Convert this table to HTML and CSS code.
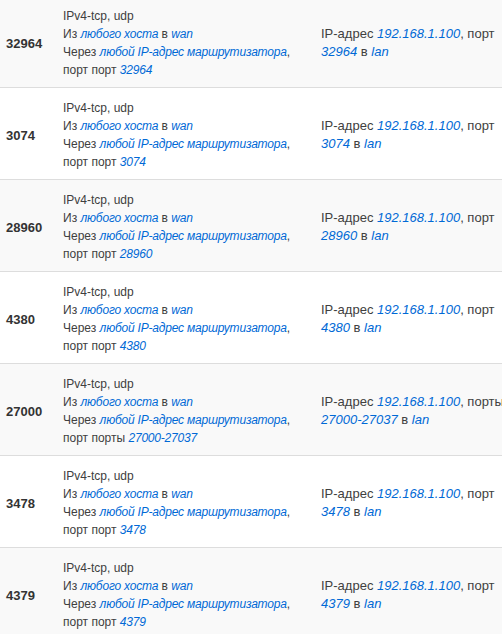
FILE: index.html
```html
<!DOCTYPE html>
<html lang="ru">
<head>
    <meta charset="UTF-8">
    <title>Перенаправление портов</title>
    <link rel="stylesheet" href="styles.css">
</head>
<body>
    <table class="rules">
        <tr class="row odd">
            <td class="name">32964</td>
            <td class="match">IPv4-tcp, udp<br>Из <a>любого хоста</a> в <a>wan</a><br>Через <a>любой IP-адрес маршрутизатора</a>,<br>порт порт <a>32964</a></td>
            <td class="target">IP-адрес <a>192.168.1.100</a>, порт <a>32964</a> в <a>lan</a></td>
        </tr>
        <tr class="row">
            <td class="name">3074</td>
            <td class="match">IPv4-tcp, udp<br>Из <a>любого хоста</a> в <a>wan</a><br>Через <a>любой IP-адрес маршрутизатора</a>,<br>порт порт <a>3074</a></td>
            <td class="target">IP-адрес <a>192.168.1.100</a>, порт <a>3074</a> в <a>lan</a></td>
        </tr>
        <tr class="row odd">
            <td class="name">28960</td>
            <td class="match">IPv4-tcp, udp<br>Из <a>любого хоста</a> в <a>wan</a><br>Через <a>любой IP-адрес маршрутизатора</a>,<br>порт порт <a>28960</a></td>
            <td class="target">IP-адрес <a>192.168.1.100</a>, порт <a>28960</a> в <a>lan</a></td>
        </tr>
        <tr class="row">
            <td class="name">4380</td>
            <td class="match">IPv4-tcp, udp<br>Из <a>любого хоста</a> в <a>wan</a><br>Через <a>любой IP-адрес маршрутизатора</a>,<br>порт порт <a>4380</a></td>
            <td class="target">IP-адрес <a>192.168.1.100</a>, порт <a>4380</a> в <a>lan</a></td>
        </tr>
        <tr class="row odd">
            <td class="name">27000</td>
            <td class="match">IPv4-tcp, udp<br>Из <a>любого хоста</a> в <a>wan</a><br>Через <a>любой IP-адрес маршрутизатора</a>,<br>порт порты <a>27000-27037</a></td>
            <td class="target">IP-адрес <a>192.168.1.100</a>, порты <a>27000-27037</a> в <a>lan</a></td>
        </tr>
        <tr class="row">
            <td class="name">3478</td>
            <td class="match">IPv4-tcp, udp<br>Из <a>любого хоста</a> в <a>wan</a><br>Через <a>любой IP-адрес маршрутизатора</a>,<br>порт порт <a>3478</a></td>
            <td class="target">IP-адрес <a>192.168.1.100</a>, порт <a>3478</a> в <a>lan</a></td>
        </tr>
        <tr class="row odd">
            <td class="name">4379</td>
            <td class="match">IPv4-tcp, udp<br>Из <a>любого хоста</a> в <a>wan</a><br>Через <a>любой IP-адрес маршрутизатора</a>,<br>порт порт <a>4379</a></td>
            <td class="target">IP-адрес <a>192.168.1.100</a>, порт <a>4379</a> в <a>lan</a></td>
        </tr>
    </table>
</body>
</html>
```

FILE: styles.css
```css
body {
    margin: 0;
    padding: 0;
    font-family: "Liberation Sans", Arial, sans-serif;
    color: #404040;
    background: #fff;
    overflow: hidden;
}
.rules {
    border-collapse: collapse;
    width: 520px;
    margin-top: -4px;
}
.row td {
    border-bottom: 1px solid #ddd;
    padding: 11px 6px 8px 6px;
    vertical-align: middle;
    text-align: left;
}
.row.odd td {
    background-color: #f9f9f9;
}
.name {
    width: 45px;
    font-weight: bold;
    font-size: 13px;
    color: #333;
}
.match {
    width: 246px;
    font-size: 12px;
    line-height: 18px;
}
.match a {
    letter-spacing: -0.2px;
}
.target {
    font-size: 13px;
    line-height: 18px;
    padding-left: 6px;
}
a {
    color: #0069d6;
    font-style: italic;
}
```
